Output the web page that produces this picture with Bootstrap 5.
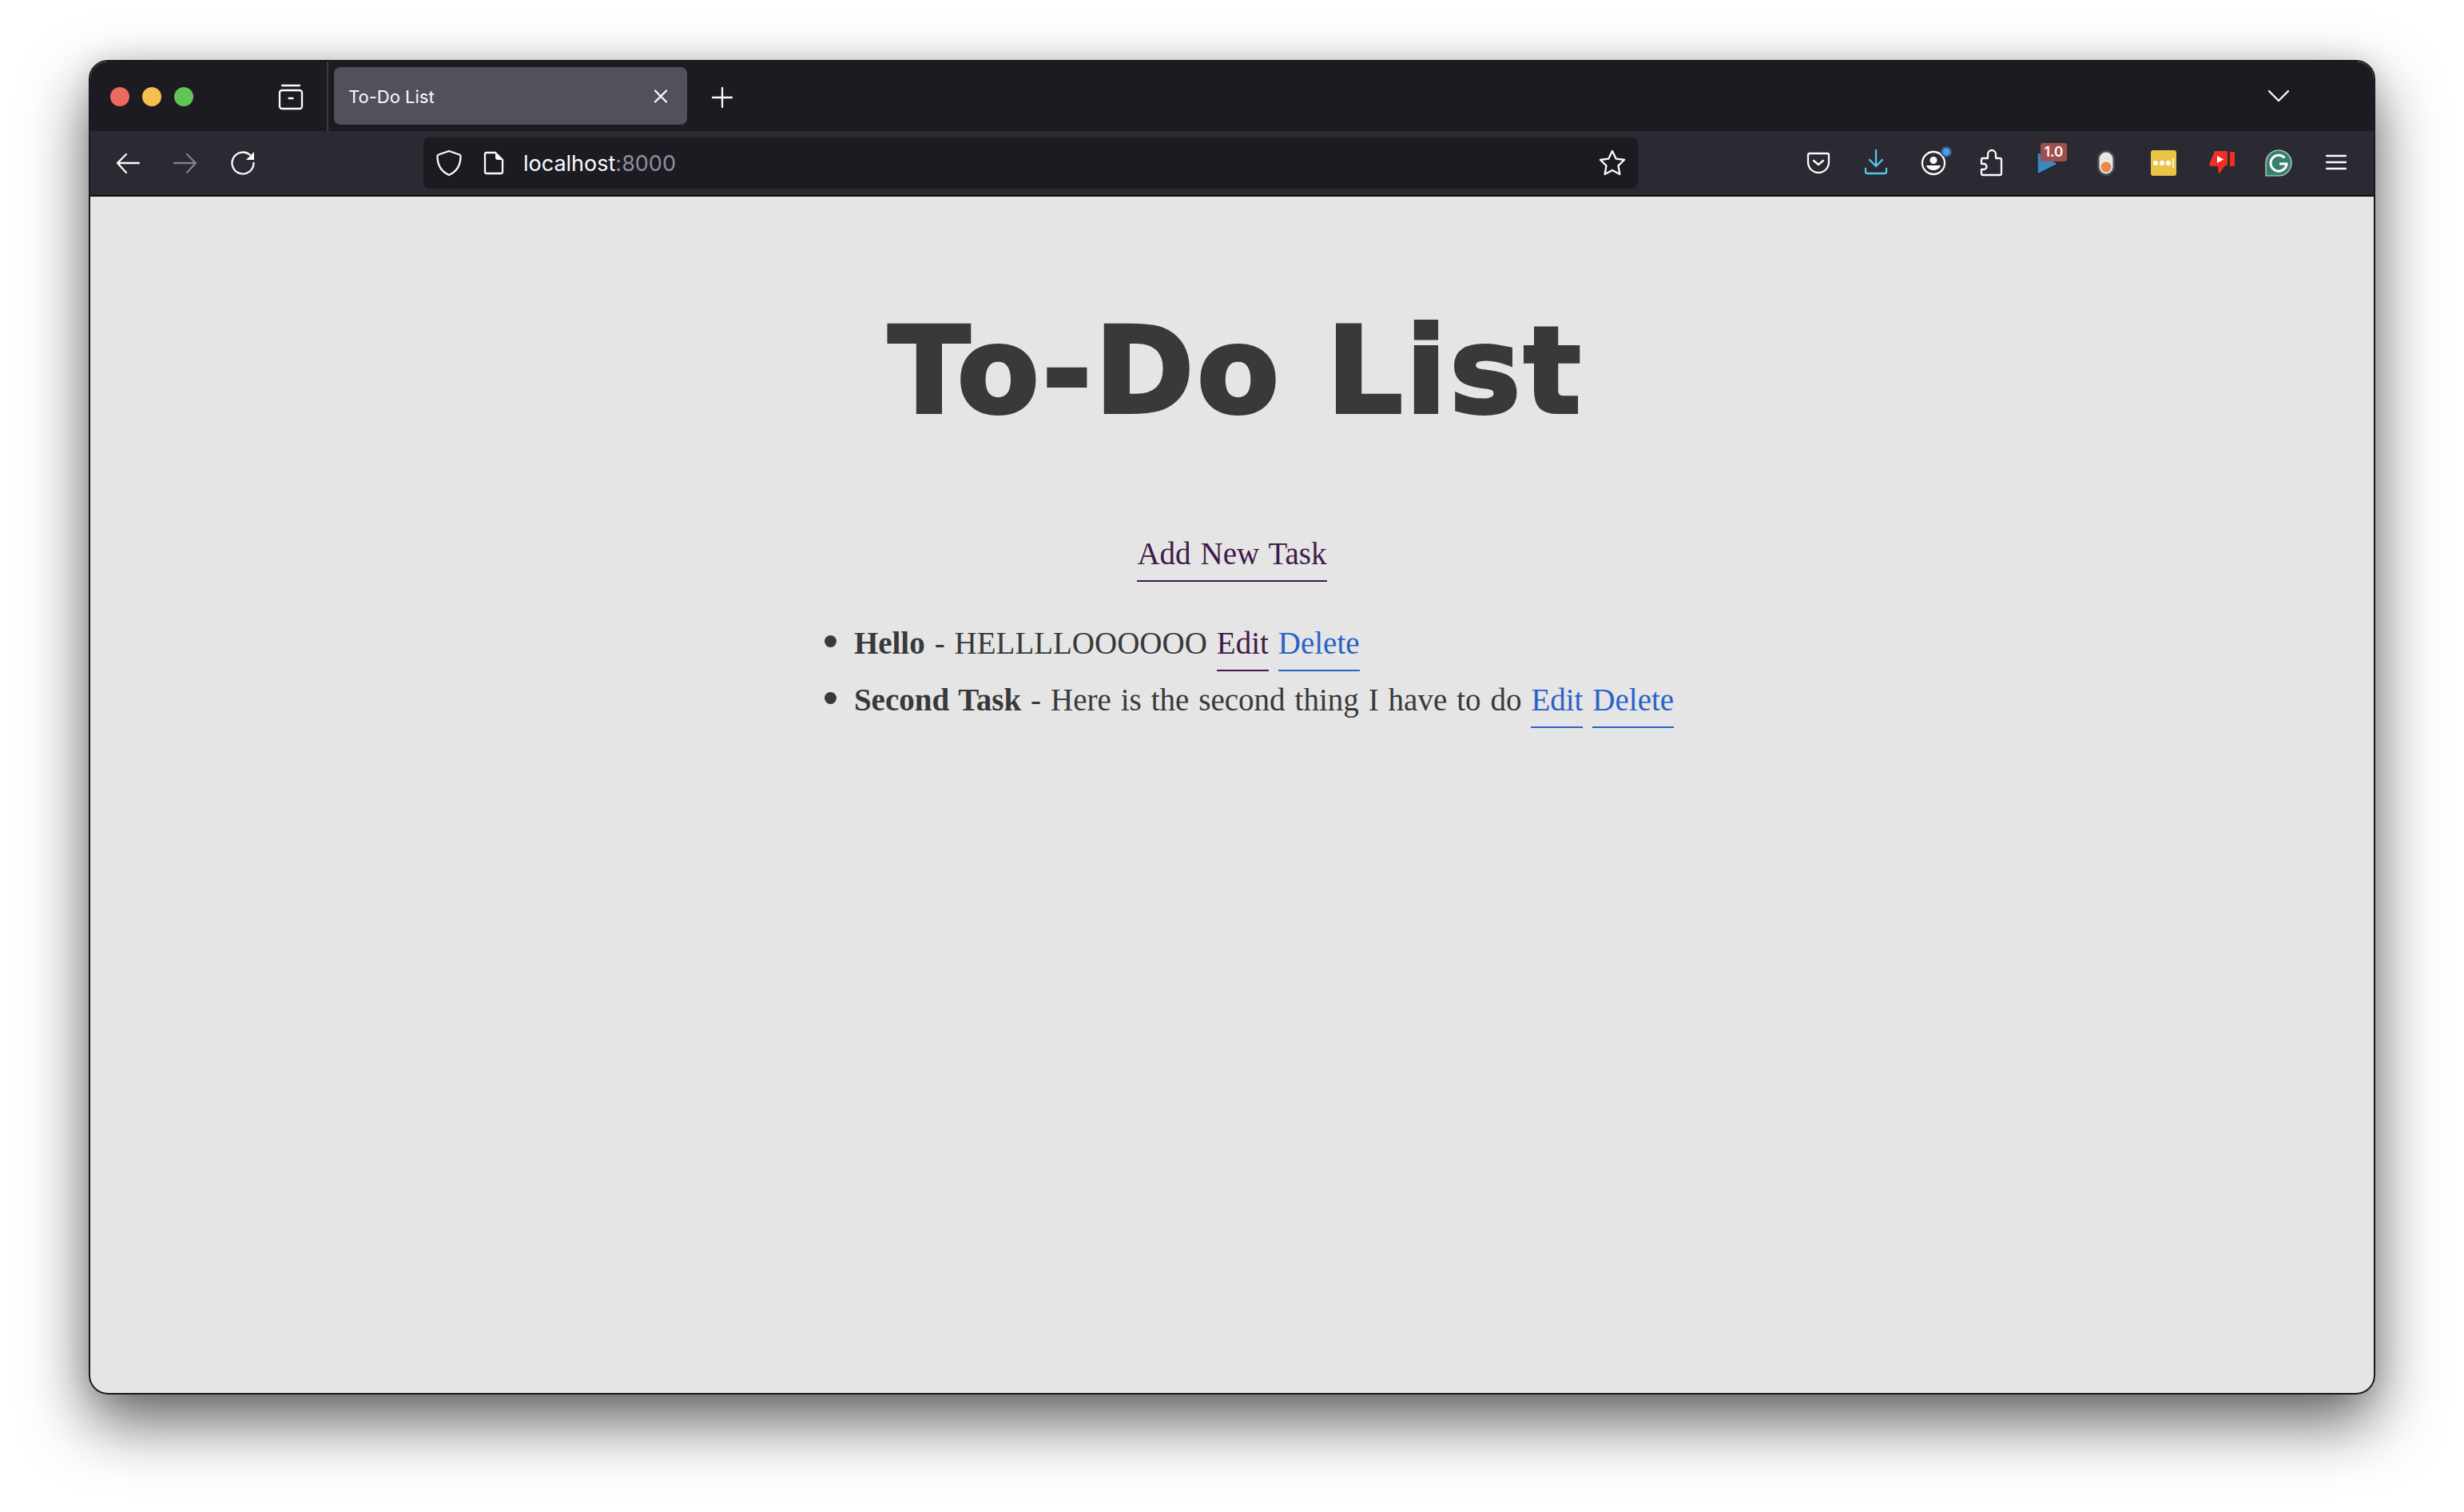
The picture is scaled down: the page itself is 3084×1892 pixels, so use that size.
<!DOCTYPE html>
<html><head><meta charset="utf-8"><title>To-Do List</title>
<link href="https://cdn.jsdelivr.net/npm/bootstrap@5.3.0/dist/css/bootstrap.min.css" rel="stylesheet">
<style>
html,body{background:#fff;margin:0;height:1892px;overflow:hidden}
.win-frame{margin:75px 0 0 111px;width:2862px;height:1670px;border-radius:24px;box-shadow:0 34px 80px rgba(0,0,0,.62),0 0 30px rgba(0,0,0,.1)}
.win{height:100%;border:2px solid #1a1a1e;border-radius:24px;overflow:hidden;background:#e5e5e5}
.titlebar{height:87px;background:#1c1b22;font-family:Inter,sans-serif;color:#fbfbfe;flex:none}
.lights{gap:16px;padding-left:25px;width:233px}
.light{width:24px;height:24px;border-radius:50%}
.l-red{background:#ed6a5e}.l-yel{background:#f5bf4f}.l-grn{background:#61c554}
.ico{width:36px;height:36px;flex:none;overflow:visible;display:block}
.ico .ln{fill:none;stroke:#fbfbfe;stroke-width:2.3;stroke-linecap:round;stroke-linejoin:round}
.tabsep{width:2px;background:#3c3b43;margin:0 7px 0 27px}
.tabbox{width:442px;height:72px;background:#52515b;border-radius:8px;padding:0 15px 0 18px;font-size:22px;margin:7px 26px 0 0}
.tabtitle{margin-top:3px}
.chev{margin-right:101px}
.toolbar{height:82px;background:#2b2a33;padding:0 11px;border-bottom:2px solid #0c0c0d;flex:none}
.slot{width:72px;height:72px;flex:none;position:relative}
.urlbar{width:1520px;height:64px;background:#1c1b22;border-radius:8px;margin-left:190px;font-family:Inter,sans-serif;font-size:27px;color:#fbfbfe;padding:0 14px}
.urlbar .dim{color:#8f8f9d}
.urltext{margin-left:19px;margin-top:2px}
.gap-url{gap:20px}
.bdg{position:absolute;left:26px;top:11px;width:33px;height:23px;background:#a04f4f;border-radius:3px;color:#fff;font:600 17px/23px Inter,sans-serif;text-align:center}
.sheet{font-family:"Liberation Serif",serif;color:#393939;font-size:39px;word-spacing:2.2px}
.heading{font-family:"DejaVu Sans",sans-serif;font-weight:700;font-size:150px;line-height:1;color:#393939;margin:0;padding:143px 0 0 10px;word-spacing:0;letter-spacing:3.5px;-webkit-text-stroke:4px #393939}
.addlink,.tasks a{display:inline-block;line-height:1;padding-bottom:14px;text-decoration:none;border-bottom:2px solid currentColor;color:#2a62c8}
.addlink,.tasks a.seen{color:#3f1a4a}
.addrow{margin-top:125px}
.tasks{display:inline-block;list-style:disc;text-align:left;margin:38px 0 0;padding:0 0 0 80px}
.tasks li{height:71px;line-height:71px}
.tasks li::marker{font-size:50px}
</style></head><body>
<div class="win-frame"><div class="win d-flex flex-column">
<div class="titlebar d-flex">
 <div class="lights d-flex align-items-center">
  <span class="light l-red"></span><span class="light l-yel"></span><span class="light l-grn"></span>
 </div>
 <div class="d-flex align-items-center">
  <svg class="ico" viewBox="0 0 36 36"><path class="ln" d="M7 4h22"/><rect class="ln" x="4" y="10" width="28" height="23" rx="3"/><path class="ln" d="M15.5 20h5"/></svg>
 </div>
 <div class="tabsep"></div>
 <div class="tabbox d-flex align-items-center justify-content-between">
  <span class="tabtitle">To-Do List</span>
  <svg class="ico" viewBox="0 0 36 36"><path class="ln" d="M11 11.5l14 14M25 11.5l-14 14"/></svg>
 </div>
 <div class="d-flex align-items-center">
  <svg class="ico" viewBox="0 0 36 36"><path class="ln" d="M18 7v24M6 19h24"/></svg>
 </div>
 <div class="d-flex align-items-center ms-auto chev">
  <svg class="ico" viewBox="0 0 36 36"><path class="ln" d="M6 11l12 12 12-12"/></svg>
 </div>
</div>
<div class="toolbar d-flex align-items-center">
 <div class="slot d-flex align-items-center justify-content-center"><svg class="ico" viewBox="0 0 36 36"><path class="ln" d="M5 18h27M16 7L5 18l11 12"/></svg></div>
 <div class="slot d-flex align-items-center justify-content-center"><svg class="ico" viewBox="0 0 36 36"><path class="ln" style="stroke:#808085" d="M4 18h27M20 7l11 11-11 12"/></svg></div>
 <div class="slot d-flex align-items-center justify-content-center"><svg class="ico" viewBox="0 0 36 36"><path class="ln" d="M26.7 7.7A13.5 13.5 0 1 0 31.5 18"/><path fill="#fbfbfe" d="M32 4v10H22z"/></svg></div>
 <div class="urlbar d-flex align-items-center">
  <div class="d-flex align-items-center gap-url">
   <svg class="ico" viewBox="0 0 36 36"><path class="ln" d="M18 3l13 4.5c1 .3 1.5 1 1.5 2C32.500 21 27 29 18 33 9 29 3.500 21 3.500 9.500c0-1 .5-1.700 1.500-2z"/></svg>
   <svg class="ico" viewBox="0 0 36 36"><path class="ln" d="M9 5h11l9 9v15a2 2 0 0 1-2 2H9a2 2 0 0 1-2-2V7a2 2 0 0 1 2-2z"/><path fill="#fbfbfe" d="M20 5v6a3 3 0 0 0 3 3h6z"/></svg>
  </div>
  <span class="urltext">localhost<span class="dim">:8000</span></span>
  <svg class="ico ms-auto" viewBox="0 0 36 36"><path class="ln" d="M18 3l4.600 9.600L33 14l-7.500 7.400L27.400 32 18 27l-9.400 5 1.900-10.600L3 14l10.400-1.400z"/></svg>
 </div>
 <div class="d-flex ms-auto">
  <div class="slot d-flex align-items-center justify-content-center"><svg class="ico" viewBox="0 0 36 36"><path class="ln" d="M7 6h22a2 2 0 0 1 2 2v9a13 13 0 0 1-26 0V8a2 2 0 0 1 2-2z"/><path class="ln" d="M12 15l6 5 6-5"/></svg></div>
  <div class="slot d-flex align-items-center justify-content-center"><svg class="ico" viewBox="0 0 36 36"><path class="ln" style="stroke:#54c7ee" d="M18 2v20M10 14l8 8 8-8M5 25v4a2 2 0 0 0 2 2h22a2 2 0 0 0 2-2v-4"/></svg></div>
  <div class="slot d-flex align-items-center justify-content-center"><svg class="ico" viewBox="0 0 36 36"><circle class="ln" cx="18" cy="18" r="14"/><circle cx="18" cy="14.500" r="4.500" fill="#fbfbfe"/><path fill="#fbfbfe" d="M9 21h18c-1 3.500-4.500 6-9 6s-8-2.500-9-6z"/><circle cx="34" cy="4" r="7" fill="#3b5a7d"/><circle cx="34" cy="4" r="4.500" fill="#4aa0ea"/></svg></div>
  <div class="slot d-flex align-items-center justify-content-center"><svg class="ico" viewBox="0 0 36 36"><path class="ln" d="M8 33h21a2 2 0 0 0 2-2V14a2 2 0 0 0-2-2h-5V7a5 5 0 0 0-10 0v5H8a2 2 0 0 0-2 2v5h3a3.500 3.500 0 0 1 0 7H6v5a2 2 0 0 0 2 2z"/></svg></div>
  <div class="slot d-flex align-items-center justify-content-center"><svg class="ico" viewBox="0 0 36 36"><path fill="#3a88bf" stroke="#14141a" d="M4 4l26 15L4 32z"/></svg><span class="bdg">1.0</span></div>
  <div class="slot d-flex align-items-center justify-content-center"><svg class="ico" viewBox="0 0 36 36"><rect x="7" y="2" width="22" height="32" rx="11" fill="#4a4a50"/><rect x="9.500" y="4.500" width="17" height="27" rx="8.500" fill="#e8e8e8"/><circle cx="18" cy="23" r="6.500" fill="#e8894a"/></svg></div>
  <div class="slot d-flex align-items-center justify-content-center"><svg class="ico" viewBox="0 0 36 36"><rect x="2" y="2" width="32" height="32" rx="3" fill="#e8c547"/><circle cx="8" cy="18" r="3" fill="#fff"/><circle cx="16" cy="18" r="3" fill="#fff"/><circle cx="24" cy="18" r="3" fill="#fff"/><path d="M30 12v12" stroke="#fff" stroke-width="1.500"/></svg></div>
  <div class="slot d-flex align-items-center justify-content-center"><svg class="ico" viewBox="0 0 36 36"><path fill="#ee3124" d="M10 3h16v18h-3L15 32l-1-10H6c-2 0-3-1.500-2.500-3.500z"/><path fill="#ee3124" d="M29 4h6v18h-6z"/><path fill="#fff" d="M13 9l8 4.500-8 4.500z"/></svg></div>
  <div class="slot d-flex align-items-center justify-content-center"><svg class="ico" viewBox="0 0 36 36"><path fill="#35806f" stroke="#d5dedb" stroke-width="1.200" d="M18 2a16 16 0 0 1 0 32H2V18A16 16 0 0 1 18 2z"/><path fill="none" stroke="#fff" stroke-width="3" d="M25.500 11.500a10 10 0 1 0 2.500 7.500h-9"/></svg></div>
  <div class="slot d-flex align-items-center justify-content-center"><svg class="ico" viewBox="0 0 36 36"><path class="ln" d="M6 9h24M6 17h24M6 25h24"/></svg></div>
 </div>
</div>
<div class="sheet text-center flex-grow-1">
 <h1 class="heading">To-Do List</h1>
 <div class="addrow"><a class="addlink" href="#">Add New Task</a></div>
 <ul class="tasks">
  <li><strong>Hello</strong> - HELLLLOOOOOO <a class="seen" href="#">Edit</a> <a href="#">Delete</a></li>
  <li><strong>Second Task</strong> - Here is the second thing I have to do <a href="#">Edit</a> <a href="#">Delete</a></li>
 </ul>
</div>
</div></div>
</body></html>
